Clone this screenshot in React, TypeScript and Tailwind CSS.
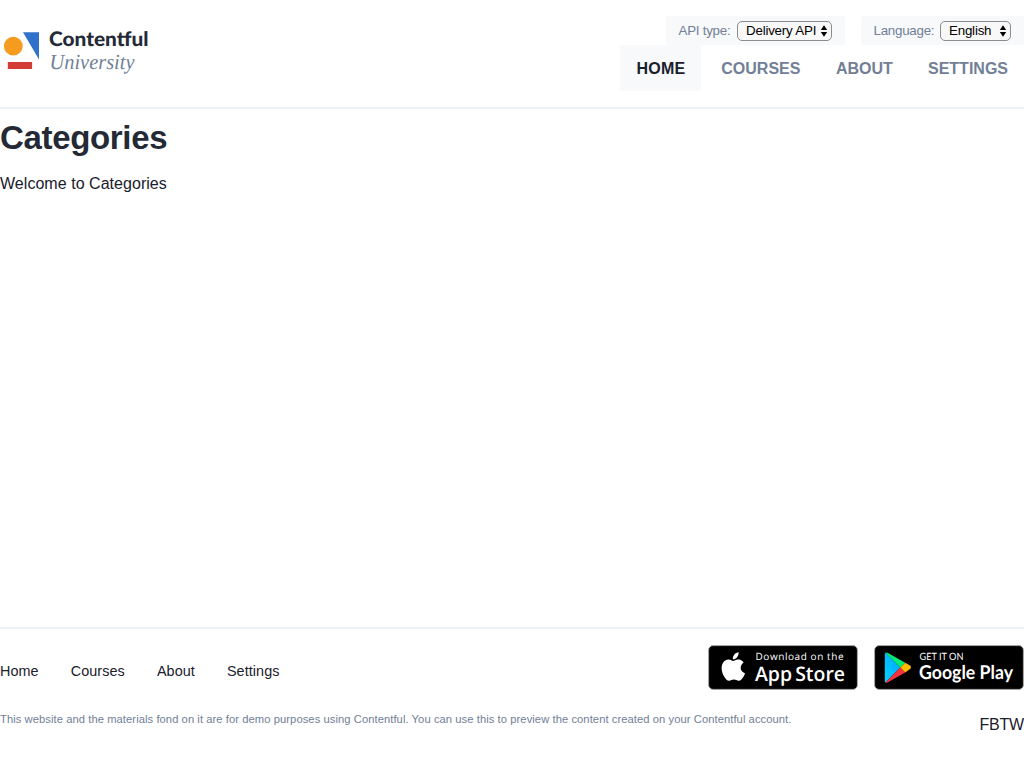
function Logo() {
  return (
    <svg width="160" height="60" viewBox="0 20 160 60" className="block" aria-label="Contentful University">
      <circle cx="13.3" cy="46.2" r="9.4" fill="#f59c20" />
      <path d="M23 32.200H39V59.500Z" fill="#3072c9" />
      <rect x="7.800" y="62" width="24.300" height="7" fill="#d43c36" />
      <text x="49" y="46.300" textLength="99.500" lengthAdjust="spacingAndGlyphs" className="font-['Lato',sans-serif] text-[20px] font-black [text-rendering:geometricPrecision]" fill="#242a38">Contentful</text>
      <text x="49.500" y="69" textLength="85" lengthAdjust="spacingAndGlyphs" className="font-['Liberation_Serif',serif] text-[21.500px] italic [text-rendering:geometricPrecision]" fill="#718096">University</text>
    </svg>
  );
}

function Picker({ label, value, box, field, text }: { label: string; value: string; box: string; field: string; text: string }) {
  return (
    <div className={`flex h-[29px] items-center rounded-[3px] bg-[#f7f9fb] pl-[12.5px] text-[13.33px] text-[#718096] ${box}`}>
      <span className="w-[58.5px] whitespace-nowrap tracking-[-0.250px]">{label}</span>
      <button className={`flex h-5 shrink-0 items-center justify-between rounded-[5px] border border-[#8c8c8c] bg-[#f8f8f8] pr-[3px] pl-2 text-[13.33px] text-black ${field}`}>
        <span className={`whitespace-nowrap ${text}`}>{value}</span>
        <svg width="8" height="12" viewBox="0 0 8 12" className="shrink-0">
          <path d="M4 0.300L7.200 5H0.800ZM4 11.700L0.800 7H7.200Z" fill="#000" />
        </svg>
      </button>
    </div>
  );
}

function AppStoreBadge() {
  return (
    <svg width="150" height="45" viewBox="0 0 150 45" className="block" aria-label="Download on the App Store">
      <rect x="0.600" y="0.600" width="148.800" height="43.800" rx="4.500" fill="#000" stroke="#a6a6a6" />
      <g transform="translate(13.600 7.200) scale(1.150 1.240)">
        <path fill="#fff" d="M19 14.100c0-3 2.400-4.400 2.600-4.500-1.500-2.100-3.700-2.400-4.500-2.400-1.900-.2-3.700 1.100-4.600 1.100-1 0-2.400-1.100-4-1.100C6.500 7.300 4.600 8.400 3.500 10c-2.200 3.500-.6 8.700 1.500 11.500 1 1.400 2.300 3 4 2.900 1.600-.1 2.200-1 4.100-1 1.900 0 2.500 1 4.200 1 1.700 0 2.800-1.400 3.800-2.800 1.200-1.600 1.700-3.200 1.700-3.300-.1 0-3.800-1.400-3.800-4.200ZM15.900 5.300c.9-1.100 1.500-2.500 1.300-3.900-1.200 0-2.800.8-3.700 1.800-.8.900-1.500 2.300-1.300 3.800 1.400.1 2.800-.7 3.700-1.700Z" transform="translate(-2.400 -1.300)" />
      </g>
      <text x="47.500" y="15.200" textLength="88" className="font-['Open_Sans',sans-serif] text-[10px] font-medium [text-rendering:geometricPrecision]" fill="#fff">Download on the</text>
      <text x="47" y="36" textLength="90" lengthAdjust="spacingAndGlyphs" className="font-['Open_Sans',sans-serif] text-[20px] font-semibold [text-rendering:geometricPrecision] [word-spacing:-2px]" fill="#fff">App Store</text>
    </svg>
  );
}

function GooglePlayBadge() {
  return (
    <svg width="150" height="45" viewBox="0 0 150 45" className="block" aria-label="Get it on Google Play">
      <defs>
        <linearGradient id="blue" x1="1" y1="0" x2="0" y2="1">
          <stop stopColor="#00a0ff" />
          <stop offset="1" stopColor="#00d5ff" />
        </linearGradient>
      </defs>
      <rect x="0.600" y="0.600" width="148.800" height="43.800" rx="4.500" fill="#000" stroke="#a6a6a6" />
      <path d="M11.500 7.700Q10.800 8.300 10.800 9.500V36Q10.800 37 11.500 37.500L26.200 22.500Z" fill="url(#blue)" />
      <path d="M11.500 7.700Q12.500 7.100 14 7.900L31.200 17.700L26.200 22.500Z" fill="#00ed76" />
      <path d="M31.200 17.700L36 20.500Q38 22.500 36 24.100L31.200 27.400L26.200 22.500Z" fill="#ffbc00" />
      <path d="M11.500 37.500Q12.500 38.100 14 37.200L31.200 27.400L26.200 22.500Z" fill="#f5333f" />
      <text x="45.500" y="15" textLength="44" lengthAdjust="spacingAndGlyphs" className="font-['Lato',sans-serif] text-[10px] [text-rendering:geometricPrecision]" fill="#fff">GET IT ON</text>
      <text x="45" y="34.300" textLength="94" lengthAdjust="spacingAndGlyphs" className="font-['Lato',sans-serif] text-[19px] font-bold [text-rendering:geometricPrecision]" fill="#fff">Google Play</text>
    </svg>
  );
}

export default function App() {
  return (
    <div className="flex h-[768px] w-[1024px] flex-col overflow-hidden bg-white font-['Liberation_Sans',Arial,sans-serif] text-[#1a202c]">
      <header className="flex h-[109px] shrink-0 justify-between border-b-2 border-[#edf2f7]">
        <div className="pt-5">
          <Logo />
        </div>
        <div className="flex flex-col items-end pt-4">
          <div className="flex gap-4">
            <Picker label="API type:" value="Delivery API" box="w-[179px]" field="w-[95px]" text="tracking-[-0.2px]" />
            <Picker label="Language:" value="English" box="w-[163px]" field="ml-[8px] w-[71px]" text="tracking-[-0.2px]" />
          </div>
          <nav className="flex h-[46px] gap-1 text-base leading-[48px] font-bold text-[#718096]">
            <a className="h-[46px] w-[81px] rounded-[3px] bg-[#f7f9fb] pl-[16.500px] tracking-[0.200px] text-[#1a202c]">HOME</a>
            <a className="w-[111px] pl-[16.300px]">COURSES</a>
            <a className="w-[88px] pl-4">ABOUT</a>
            <a className="w-[112px] pl-4">SETTINGS</a>
          </nav>
        </div>
      </header>
      <main className="flex-1">
        <h1 className="mt-[9px] text-[33px] leading-10 font-bold tracking-[-0.330px] text-[#242a35]">Categories</h1>
        <p className="mt-[14px] text-base leading-6 tracking-[0.040px]">Welcome to Categories</p>
      </main>
      <footer className="h-[141px] shrink-0 border-t-2 border-[#edf2f7] pt-4">
        <div className="flex h-[45px] justify-between">
          <nav className="flex gap-8 pt-[15px] text-[14.400px] leading-[22px] tracking-[0.080px]">
            <a>Home</a>
            <a>Courses</a>
            <a>About</a>
            <a>Settings</a>
          </nav>
          <div className="flex gap-4">
            <AppStoreBadge />
            <GooglePlayBadge />
          </div>
        </div>
        <div className="flex justify-between whitespace-nowrap">
          <p className="pt-5 text-[11.200px] leading-[18px] tracking-[0.070px] text-[#718096]">
            This website and the materials fond on it are for demo purposes using Contentful. You can use this to preview the content created on your Contentful account.
          </p>
          <span className="pt-[23px] text-base leading-6 tracking-[-0.200px]">FBTW</span>
        </div>
      </footer>
    </div>
  );
}
